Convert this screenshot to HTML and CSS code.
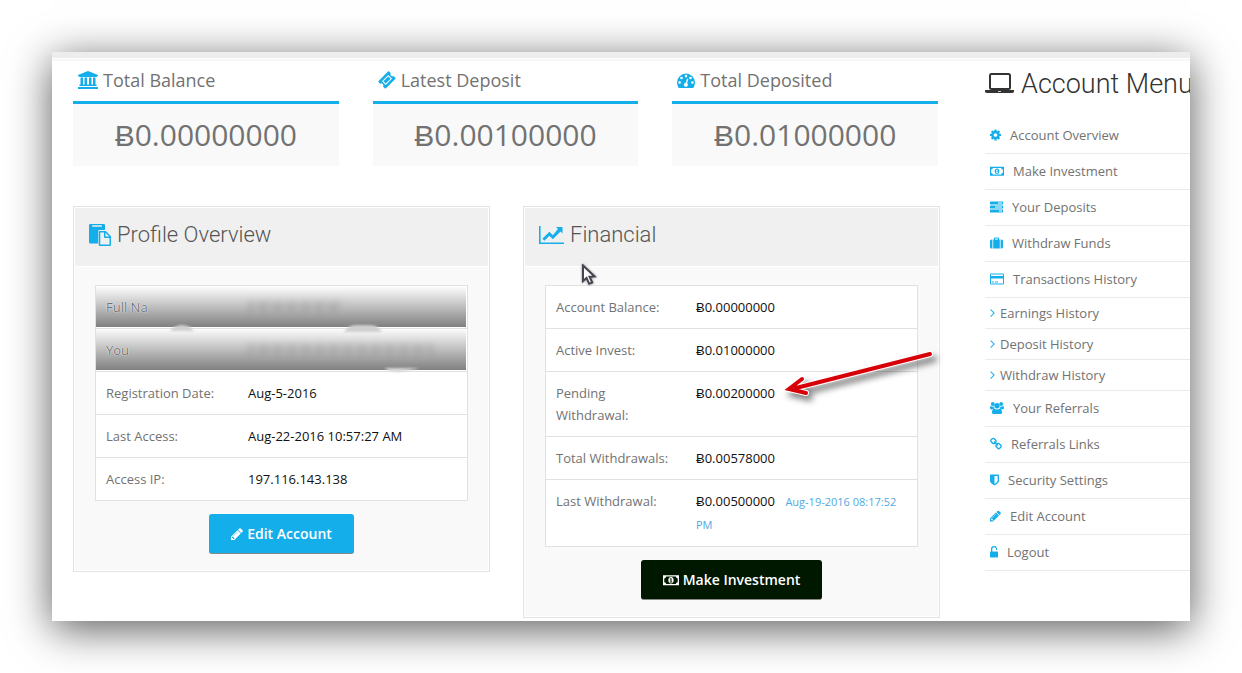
FILE: index.html
```html
<!DOCTYPE html>
<html lang="en">
<head>
    <meta charset="UTF-8">
    <title>Account Overview</title>
    <link rel="stylesheet" href="styles.css">
</head>
<body>
<!-- icons -->
<svg class="sprite" aria-hidden="true">
    <symbol id="i-bank" viewBox="0 0 20 18">
        <path d="M10 0L20 4v1.300H18.800V6H1.200V5.300H0V4zM2.500 6.500H5v7h1.500v-7H9v7h2v-7h2.500v7H15v-7h2.500v7h1V15h-17v-1.500h1zM0 16h20v2H0z"/>
    </symbol>
    <symbol id="i-ticket" viewBox="0 0 18 18">
        <path fill-rule="evenodd" d="M11.200.6l1.600 1.600a2 2 0 0 0 2.800 2.800l1.700 1.700q.6.600 0 1.200L7.900 17.300q-.6.600-1.200 0L5 15.600a2 2 0 0 0-2.800-2.800L.6 11.200q-.6-.6 0-1.200L10 .6q.6-.6 1.200 0zM10.300 4L4 10.300 7.700 14 14 7.700zM10.300 5.400L12.600 7.700 7.700 12.600 5.400 10.300z"/>
    </symbol>
    <symbol id="i-gauge" viewBox="0 0 18 18">
        <path fill-rule="evenodd" d="M9 2.500a9 9 0 0 1 9 9q0 2.600-1.400 4.900-.3.500-.8.500H2.200q-.5 0-.8-.5Q0 14.100 0 11.500a9 9 0 0 1 9-9zM2.600 10.200a1.300 1.300 0 1 0 0 2.600 1.300 1.300 0 0 0 0-2.600zM4.500 5.700a1.300 1.300 0 1 0 0 2.600 1.300 1.300 0 0 0 0-2.600zM9 3.800a1.300 1.300 0 1 0 0 2.600 1.300 1.300 0 0 0 0-2.600zM13.500 5.700a1.300 1.300 0 1 0 0 2.600 1.300 1.300 0 0 0 0-2.600zM15.400 10.200a1.300 1.300 0 1 0 0 2.600 1.300 1.300 0 0 0 0-2.600zM10.100 7.500L8.800 11.800a2 2 0 1 0 1.300.4L11.300 7.900z"/>
    </symbol>
    <symbol id="i-laptop" viewBox="0 0 30 28">
        <path fill-rule="evenodd" d="M6 3h17.500A2.500 2.500 0 0 1 26 5.500v12a2.500 2.500 0 0 1-2.500 2.500h-17A2.500 2.500 0 0 1 4 17.500v-12A2.500 2.500 0 0 1 6 3zM6.500 5q-.5 0-.5.5v12q0 .5.5.5h17q.5 0 .5-.5v-12q0-.5-.5-.5zM0 20h29v1.500q0 1.500-2.500 1.500h-24Q0 23 0 21.500zM13 21v.7h3V21z"/>
    </symbol>
    <symbol id="i-paste" viewBox="0 0 22 22">
        <path fill-rule="evenodd" d="M1.300 0h13.400Q16 0 16 1.300V6h-5.500Q9.200 6 9.200 7.300v12.200H1.300Q0 19.500 0 18.200V1.300Q0 0 1.300 0zM3.200 1.300v1.500h9.600V1.300zM10.600 7h6.200L22 12.200v8.500q0 1.300-1.300 1.300H10.600q-.8 0-.8-1V8q0-1 .8-1zM11.300 8.500v12h9.200V14H16q-1 0-1-1V8.500zM16.500 8.800v3.700h3.700z"/>
    </symbol>
    <symbol id="i-chart" viewBox="0 0 25 22">
        <path d="M0 2h1.600v16.400H25V20H0zM17 3h6.500v6.500l-2-2-7.700 7.700-3.400-3.400-5 5-2-2 7-7 3.400 3.400L19 5z"/>
    </symbol>
    <symbol id="i-cog" viewBox="128 0 1536 1792">
        <path d="M1152 896q0-106-75-181t-181-75-181 75-75 181 75 181 181 75 181-75 75-181zm512-109v222q0 12-8 23t-20 13l-185 28q-19 54-39 91 35 50 107 138 10 12 10 25t-9 23q-27 37-99 108t-94 71q-12 0-26-9l-138-108q-44 23-91 38-16 136-29 186-7 28-36 28h-222q-14 0-24.500-8.500t-11.500-21.500l-28-184q-49-16-90-37l-141 107q-10 9-25 9-14 0-25-11-126-114-165-168-7-10-7-23 0-12 8-23 15-21 51-66.500t54-70.500q-27-50-41-99l-183-27q-13-2-21-12.500t-8-23.500v-222q0-12 8-23t19-13l186-28q14-46 39-92-40-57-107-138-10-12-10-24 0-10 9-23 26-36 98.500-107.500t94.500-71.500q13 0 26 10l138 107q44-23 91-38 16-136 29-186 7-28 36-28h222q14 0 24.500 8.500t11.500 21.500l28 184q49 16 90 37l142-107q9-9 24-9 13 0 25 10 129 119 165 170 7 8 7 22 0 12-8 23-15 21-51 66.500t-54 70.500q26 50 41 98l183 28q13 2 21 12.500t8 23.500z"/>
    </symbol>
    <symbol id="i-money" viewBox="0 0 15 13">
        <path fill-rule="evenodd" d="M0 2h15v9.500H0zM3 3.200A2 2 0 0 1 1.200 5v3.500A2 2 0 0 1 3 10.300h9a2 2 0 0 1 1.800-1.800V5A2 2 0 0 1 12 3.200zM7.500 3.700c1.700 0 2.500 1.400 2.500 3s-.8 3.100-2.500 3.100S5 8.400 5 6.700s.8-3 2.500-3zM7.200 4.800L6.200 5.600l.4.500.4-.2v2.200h-.7v.7h2.400v-.7H8V4.800z"/>
    </symbol>
    <symbol id="i-tasks" viewBox="0 0 13 13">
        <path fill-rule="evenodd" d="M.5 1h12q.5 0 .5.500v2q0 .5-.5.500H.5Q0 4 0 3.500v-2Q0 1 .5 1zM8 2v1h4V2zM.5 5h12q.5 0 .5.500v2q0 .5-.5.500H.5Q0 8 0 7.500v-2Q0 5 .5 5zM5 6v1h7V6zM.5 9h12q.5 0 .5.500v2q0 .5-.5.500H.5Q0 12 0 11.500v-2Q0 9 .5 9zM9 10v1h3v-1z"/>
    </symbol>
    <symbol id="i-suitcase" viewBox="0 0 13 13">
        <path fill-rule="evenodd" d="M3.200 12V3H4V1.700Q4 1 4.700 1h3.600Q9 1 9 1.700V3h.8v9zM5 2v1h3V2zM2.400 3v9h-.8Q0 12 0 10.400V4.600Q0 3 1.600 3zM10.600 3h.8Q13 3 13 4.600v5.800q0 1.600-1.600 1.600h-.8z"/>
    </symbol>
    <symbol id="i-card" viewBox="0 0 14 13">
        <path fill-rule="evenodd" d="M1.200 1h11.600Q14 1 14 2.200v8.600q0 1.200-1.200 1.200H1.200Q0 12 0 10.800V2.200Q0 1 1.200 1zM1 2v1.400h12V2zM1 6v5h12V6zM2 9h2v1H2zM5 9h3v1H5z"/>
    </symbol>
    <symbol id="i-chevron" viewBox="0 0 5 13">
        <path d="M.3 3.500l.7-.7L4.800 6.600 1 10.400l-.7-.7 3.100-3.100z"/>
    </symbol>
    <symbol id="i-users" viewBox="0 0 14 13">
        <circle cx="2.800" cy="2.500" r="1.900"/>
        <circle cx="11.200" cy="2.500" r="1.900"/>
        <circle cx="7" cy="4.200" r="2.700"/>
        <path d="M1 4.500q1.500 1 2.700.4-.1 1.500.8 2.300H3q-.6.300-1 .8-2 0-2-1.500Q0 4.600 1 4.500zM13 4.500q-1.500 1-2.700.4.100 1.500-.8 2.300H11q.6.300 1 .8 2 0 2-1.500 0-1.900-1-2zM4.300 7q2.700 1.800 5.400 0 2.300.3 2.300 4 0 1.500-1.500 1.500h-7Q2 12.500 2 11q0-3.700 2.300-4z"/>
    </symbol>
    <symbol id="i-link" viewBox="64 0 1664 1792">
        <path d="M1520 1216q0-40-28-68l-208-208q-28-28-68-28-42 0-72 32 3 3 19 18.500t21.500 21.500 15 19 13 25.500 3.500 27.500q0 40-28 68t-68 28q-15 0-27.500-3.500t-25.500-13-19-15-21.500-21.500-18.500-19q-33 31-33 73 0 40 28 68l206 207q27 27 68 27 40 0 68-26l147-146q28-28 28-67zm-703-705q0-40-28-68l-206-207q-28-28-68-28-39 0-68 27l-147 146q-28 28-28 67 0 40 28 68l208 208q27 27 68 27 42 0 72-31-3-3-19-18.500t-21.500-21.500-15-19-13-25.500-3.500-27.500q0-40 28-68t68-28q15 0 27.500 3.500t25.500 13 19 15 21.500 21.500 18.500 19q33-31 33-73zm895 705q0 120-85 203l-147 146q-83 83-203 83-121 0-204-85l-206-207q-83-83-83-203 0-123 88-209l-88-88q-86 88-208 88-120 0-204-84l-208-208q-84-84-84-204t85-203l147-146q83-83 203-83 121 0 204 85l206 207q83 83 83 203 0 123-88 209l88 88q86-88 208-88 120 0 204 84l208 208q84 84 84 204z"/>
    </symbol>
    <symbol id="i-shield" viewBox="256 0 1280 1792">
        <path d="M1344 960v-640h-448v1137q119-63 213-137 235-184 235-360zm192-768v768q0 86-33.500 170.500t-83 150-118 127.500-126.500 103-121 77.500-89.500 49.500-42.500 20q-12 6-26 6t-26-6q-16-7-42.500-20t-89.500-49.500-121-77.500-126.500-103-118-127.500-83-150-33.500-170.500v-768q0-26 19-45t45-19h1152q26 0 45 19t19 45z"/>
    </symbol>
    <symbol id="i-pencil" viewBox="128 0 1536 1792">
        <path d="M491 1536l91-91-235-235-91 91v107h128v128h107zm523-928q0-22-22-22-10 0-17 7l-542 542q-7 7-7 17 0 22 22 22 10 0 17-7l542-542q7-7 7-17zm-54-192l416 416-832 832h-416v-416zm683 96q0 53-37 90l-166 166-416-416 166-165q36-38 90-38 53 0 91 38l235 234q37 39 37 91z"/>
    </symbol>
    <symbol id="i-unlock" viewBox="0 0 8 13">
        <path d="M.7 6H1V3.600a3 3 0 0 1 6 0v.6q0 .4-.5.400t-.5-.4v-.6a1.800 1.800 0 0 0-3.700 0V6h5q.7 0 .7.700v4.600q0 .7-.7.700H.7Q0 12 0 11.300V6.700Q0 6 .7 6z"/>
    </symbol>
</svg>

<div class="window">
    <div class="topStrip"></div>
    <div class="content">
        <div class="main">
            <div class="stats">
                <div class="stat">
                    <h3><svg class="icon w20"><use href="#i-bank"/></svg>Total Balance</h3>
                    <p>Ƀ0.00000000</p>
                </div>
                <div class="stat">
                    <h3><svg class="icon w18"><use href="#i-ticket"/></svg>Latest Deposit</h3>
                    <p>Ƀ0.00100000</p>
                </div>
                <div class="stat">
                    <h3><svg class="icon w18"><use href="#i-gauge"/></svg>Total Deposited</h3>
                    <p>Ƀ0.01000000</p>
                </div>
            </div>

            <div class="panels">
                <div class="panel profile">
                    <h2><svg class="icon w22"><use href="#i-paste"/></svg>Profile Overview</h2>
                    <div class="panelBody">
                        <table>
                            <tr class="masked">
                                <th scope="row">Full Na</th>
                                <td><span class="smudge short"></span></td>
                            </tr>
                            <tr class="masked">
                                <th scope="row">You</th>
                                <td><span class="smudge"></span></td>
                            </tr>
                            <tr>
                                <th scope="row">Registration Date:</th>
                                <td>Aug-5-2016</td>
                            </tr>
                            <tr>
                                <th scope="row">Last Access:</th>
                                <td>Aug-22-2016 10:57:27 AM</td>
                            </tr>
                            <tr>
                                <th scope="row">Access IP:</th>
                                <td>197.116.143.138</td>
                            </tr>
                        </table>
                        <button type="button" class="btn blue"><svg class="icon w12"><use href="#i-pencil"/></svg>Edit Account</button>
                    </div>
                    <svg class="bumps" viewBox="0 0 250 50">
                        <path d="M0 6q4-6 12-6t12 6zM174 7q4-7 12-7h14q8 0 12 7z" fill="#cfcfcf"/>
                        <path d="M214 43h36q-16 3-22 4-8 0-14-4z" fill="#d8d8d8"/>
                    </svg>
                </div>

                <div class="panel financial">
                    <h2><svg class="icon w25"><use href="#i-chart"/></svg>Financial</h2>
                    <div class="panelBody">
                        <table>
                            <tr>
                                <th scope="row">Account Balance:</th>
                                <td>Ƀ0.00000000</td>
                            </tr>
                            <tr>
                                <th scope="row">Active Invest:</th>
                                <td>Ƀ0.01000000</td>
                            </tr>
                            <tr>
                                <th scope="row">Pending Withdrawal:</th>
                                <td>Ƀ0.00200000</td>
                            </tr>
                            <tr>
                                <th scope="row">Total Withdrawals:</th>
                                <td>Ƀ0.00578000</td>
                            </tr>
                            <tr>
                                <th scope="row">Last Withdrawal:</th>
                                <td>Ƀ0.00500000 <small>Aug-19-2016 08:17:52 PM</small></td>
                            </tr>
                        </table>
                        <button type="button" class="btn dark"><svg class="icon w16"><use href="#i-money"/></svg>Make Investment</button>
                    </div>
                    <svg class="cursor" viewBox="0 0 16 22">
                        <path d="M2 1.500v15.500l3.600-3.200 2.600 6 3-1.300-2.700-5.800 5-.3z" fill="#fff" stroke="#45454f" stroke-width="2"/>
                    </svg>
                    <svg class="arrow" viewBox="0 0 156 54">
                        <g fill="none" stroke-linecap="round">
                            <path d="M148 7L14 41M20 32L7 42L24 46" stroke="#fff" stroke-width="6"/>
                            <path d="M148 7L14 41M20 32L7 42L24 46" stroke="#d80008" stroke-width="4"/>
                        </g>
                    </svg>
                </div>
            </div>
        </div>

        <div class="sidebar">
            <h1><svg class="icon w30"><use href="#i-laptop"/></svg>Account Menu</h1>
            <ul>
                <li><a href="#"><svg class="icon w11"><use href="#i-cog"/></svg>Account Overview</a></li>
                <li><a href="#"><svg class="icon w14"><use href="#i-money"/></svg>Make Investment</a></li>
                <li><a href="#"><svg class="icon w13"><use href="#i-tasks"/></svg>Your Deposits</a></li>
                <li><a href="#"><svg class="icon w13"><use href="#i-suitcase"/></svg>Withdraw Funds</a></li>
                <li><a href="#"><svg class="icon w14"><use href="#i-card"/></svg>Transactions History</a></li>
                <li class="sub"><a href="#"><svg class="icon w5"><use href="#i-chevron"/></svg>Earnings History</a></li>
                <li class="sub"><a href="#"><svg class="icon w5"><use href="#i-chevron"/></svg>Deposit History</a></li>
                <li class="sub"><a href="#"><svg class="icon w5"><use href="#i-chevron"/></svg>Withdraw History</a></li>
                <li><a href="#"><svg class="icon w14"><use href="#i-users"/></svg>Your Referrals</a></li>
                <li><a href="#"><svg class="icon w12"><use href="#i-link"/></svg>Referrals Links</a></li>
                <li><a href="#"><svg class="icon w9"><use href="#i-shield"/></svg>Security Settings</a></li>
                <li><a href="#"><svg class="icon w11"><use href="#i-pencil"/></svg>Edit Account</a></li>
                <li><a href="#"><svg class="icon w8"><use href="#i-unlock"/></svg>Logout</a></li>
            </ul>
        </div>
    </div>
</div>
</body>
</html>
```
FILE: styles.css
```css
*{
    margin: 0;
    padding: 0;
    box-sizing: border-box;
}
body{
    background: #fff;
    color: #727272;
    font: 13px/22px "Open Sans", "Liberation Sans", sans-serif;
    overflow: hidden;
}
.sprite{
    position: absolute;
    width: 0;
    height: 0;
}
.window{
    margin: 52px;
    background: #fff;
    box-shadow: 0 8px 40px rgba(0,0,0,.65);
    overflow: hidden;
}
.topStrip{
    height: 10px;
    background: linear-gradient(#ededed 6px, #fff 6px, #fff 7px, #f3f3f3 7px, #fff 10px);
}
.content{
    display: flex;
    gap: 45px;
    padding: 0 0 3px 21px;
}
.main{
    flex: 1;
    min-width: 0;
}

/* icons */
.icon{
    flex: none;
    height: 13px;
    fill: #14aeeb;
}
.w5{ width: 5px; }
.w8{ width: 8px; }
.w9{ width: 9px; }
.w11{ width: 11px; }
.w12{ width: 12px; }
.w13{ width: 13px; }
.w14{ width: 14px; }
.w16{ width: 16px; }
.w18{ width: 18px; }
.w20{ width: 20px; }
.w22{ width: 22px; }
.w25{ width: 25px; }
.w30{ width: 30px; }

/* stats */
.stats{
    display: flex;
    gap: 34px;
    margin-right: 2px;
}
.stat{
    flex: 1;
}
.stat h3{
    display: flex;
    align-items: center;
    gap: 5px;
    height: 42px;
    padding: 0 0 4px 5px;
    border-bottom: 3px solid #14aeeb;
    font-size: 18px;
    font-weight: 400;
}
.stat h3 .icon{
    height: 18px;
}
.stat p{
    height: 62px;
    background: #f9f9f9;
    font-size: 30px;
    line-height: 62px;
    text-align: center;
}

/* panels */
.panels{
    display: flex;
    align-items: flex-start;
    gap: 33px;
    margin-top: 40px;
}
.panel{
    position: relative;
    flex: 1;
    padding: 1px;
    border: 1px solid #e3e3e3;
}
.panel h2{
    display: flex;
    align-items: center;
    gap: 6px;
    height: 58px;
    padding: 0 14px 4px;
    background: #f0f0f0;
    color: #555;
    font: 300 22px/28px Roboto, sans-serif;
}
.panel h2 .icon{
    height: 22px;
}
.panelBody{
    margin-top: 1px;
    padding: 18px 20px 16px;
    background: #f9f9f9;
    text-align: center;
}
table{
    width: 100%;
    border: 1px solid #e1e1e1;
    border-spacing: 0;
    background: #fff;
    text-align: left;
}
th,
td{
    padding: 10px;
    border-top: 1px solid #e1e1e1;
    font-weight: 400;
    vertical-align: top;
}
tr:first-child th,
tr:first-child td{
    border-top: 0;
}
th{
    width: 142px;
}
.financial th{
    width: 140px;
}
td{
    color: #111;
}
small{
    margin-left: 7px;
    color: #51a9e3;
    font-size: 11px;
}
.masked{
    background: linear-gradient(#fff, #808080) no-repeat 0 0 / calc(100% - 1px) calc(100% - 1px);
}
.masked th{
    text-shadow: 0 0 1px #fff, 0 0 1px #fff;
}
.smudge{
    display: block;
    width: 185px;
    height: 12px;
    margin: 5px 0;
    background: repeating-linear-gradient(90deg, #777 0, #999 5px, #bbb 9px, #888 14px);
    filter: blur(3px);
    opacity: .3;
}
.short{
    width: 95px;
}
.bumps{
    position: absolute;
    top: 118px;
    left: 96px;
    width: 250px;
    height: 50px;
    filter: blur(1px);
}
.btn{
    display: inline-flex;
    align-items: center;
    gap: 4px;
    height: 40px;
    margin-top: 13px;
    padding: 0 22px;
    border: 0;
    border-bottom: 1px solid #888;
    border-radius: 3px;
    color: #fff;
    font: 600 14px "Open Sans", sans-serif;
}
.btn .icon{
    height: 14px;
    fill: #fff;
}
.blue{
    background: #14aeeb;
}
.dark{
    background: #001800;
}
.cursor{
    position: absolute;
    top: 57px;
    left: 57px;
    width: 16px;
    height: 22px;
    filter: drop-shadow(0 0 1px rgba(0,0,0,.5));
}
.arrow{
    position: absolute;
    top: 140px;
    left: 258px;
    width: 156px;
    height: 54px;
    filter: drop-shadow(4px 5px 3px rgba(0,0,0,.5));
}

/* menu */
.sidebar{
    width: 205px;
}
.sidebar h1{
    display: flex;
    align-items: center;
    gap: 6px;
    height: 56px;
    padding-bottom: 12px;
    color: #333;
    font: 300 27px/36px Roboto, sans-serif;
    white-space: nowrap;
}
.sidebar h1 .icon{
    height: 28px;
    fill: #333;
}
.sidebar ul{
    list-style: none;
}
.sidebar li{
    border-bottom: 1px solid #eaeaea;
}
.sidebar a{
    display: flex;
    align-items: center;
    gap: 9px;
    height: 35px;
    padding: 0 0 2px 5px;
    color: #727272;
    text-decoration: none;
}
.sidebar a .icon{
    height: 14px;
}
.sidebar .sub a{
    gap: 5px;
    height: 30px;
    padding-bottom: 0;
}
```
